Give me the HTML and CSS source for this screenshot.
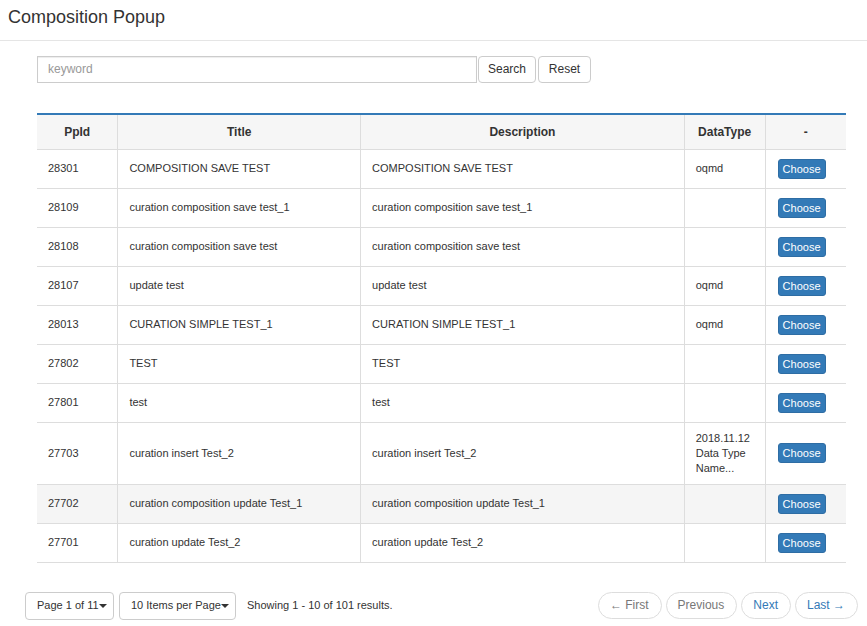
FILE: index.html
```html
<!DOCTYPE html>
<html>
<head>
<meta charset="utf-8">
<title>Composition Popup</title>
<link rel="stylesheet" href="styles.css">
</head>
<body>
<header class="popup-header">Composition Popup</header>
<main class="content">
  <form class="search-row">
    <input class="search-input" type="text" placeholder="keyword">
    <button type="button" class="btn btn-search">Search</button>
    <button type="button" class="btn btn-reset">Reset</button>
  </form>
  <table class="grid">
    <colgroup>
      <col class="c10"><col class="c30"><col class="c40"><col class="c10"><col class="c10">
    </colgroup>
    <thead>
      <tr><th>PpId</th><th>Title</th><th>Description</th><th>DataType</th><th>-</th></tr>
    </thead>
    <tbody>
      <tr><td>28301</td><td>COMPOSITION SAVE TEST</td><td>COMPOSITION SAVE TEST</td><td>oqmd</td><td><button class="choose">Choose</button></td></tr>
      <tr><td>28109</td><td>curation composition save test_1</td><td>curation composition save test_1</td><td></td><td><button class="choose">Choose</button></td></tr>
      <tr><td>28108</td><td>curation composition save test</td><td>curation composition save test</td><td></td><td><button class="choose">Choose</button></td></tr>
      <tr><td>28107</td><td>update test</td><td>update test</td><td>oqmd</td><td><button class="choose">Choose</button></td></tr>
      <tr><td>28013</td><td>CURATION SIMPLE TEST_1</td><td>CURATION SIMPLE TEST_1</td><td>oqmd</td><td><button class="choose">Choose</button></td></tr>
      <tr><td>27802</td><td>TEST</td><td>TEST</td><td></td><td><button class="choose">Choose</button></td></tr>
      <tr><td>27801</td><td>test</td><td>test</td><td></td><td><button class="choose">Choose</button></td></tr>
      <tr><td>27703</td><td>curation insert Test_2</td><td>curation insert Test_2</td><td>2018.11.12<br>Data Type<br>Name...</td><td><button class="choose">Choose</button></td></tr>
      <tr class="hover"><td>27702</td><td>curation composition update Test_1</td><td>curation composition update Test_1</td><td></td><td><button class="choose">Choose</button></td></tr>
      <tr><td>27701</td><td>curation update Test_2</td><td>curation update Test_2</td><td></td><td><button class="choose">Choose</button></td></tr>
    </tbody>
  </table>
</main>
<footer class="pager-bar">
  <div class="pager-left">
    <button class="btn btn-sm btn-page">Page 1 of 11<span class="caret"></span></button>
    <button class="btn btn-sm btn-items">10 Items per Page<span class="caret"></span></button>
    <span class="showing">Showing 1 - 10 of 101 results.</span>
  </div>
  <div class="pager-right">
    <span class="pill disabled">&larr; First</span>
    <span class="pill disabled">Previous</span>
    <span class="pill">Next</span>
    <span class="pill">Last &rarr;</span>
  </div>
</footer>
</body>
</html>
```
FILE: styles.css
```css
* { box-sizing: border-box; }
html, body { margin: 0; padding: 0; }
body {
  font-family: "Liberation Sans", Arial, sans-serif;
  color: #333;
  background: #fff;
  width: 867px;
}
.popup-header {
  font-size: 18px;
  line-height: 30px;
  padding: 2px 8px 8px;
  border-bottom: 1px solid #e5e5e5;
  height: 41px;
}
.content {
  padding: 14px 21px 0 37px;
}
.search-row {
  display: flex;
  align-items: center;
  gap: 1px;
  height: 28px;
  margin: 0;
}
.search-input {
  width: 440px;
  height: 27px;
  border: 1px solid #ccc;
  box-shadow: inset 0 1px 1px rgba(0,0,0,.075);
  padding: 0 10px;
  font-family: inherit;
  font-size: 12px;
  color: #555;
  margin: 0;
  outline: none;
}
.search-input::placeholder { color: #999; }
.btn {
  font-family: inherit;
  font-size: 12px;
  line-height: 17px;
  padding: 4px 9px;
  color: #333;
  background: #fff;
  border: 1px solid #ccc;
  border-radius: 4px;
  margin: 0;
  height: 27px;
}
.btn-search { width: 58px; }
.btn-reset { width: 53px; margin-left: 1px; }
.grid {
  width: 809px;
  margin-top: 30px;
  border-collapse: collapse;
  table-layout: fixed;
  font-size: 11px;
}
.c10 { width: 10%; }
.c30 { width: 30%; }
.c40 { width: 40%; }
.grid thead tr { border-top: 2px solid #337ab7; }
.grid th {
  background: #f6f6f6;
  font-size: 12px;
  font-weight: bold;
  text-align: center;
  height: 35px;
  padding: 0 10px;
  border-bottom: 1px solid #ddd;
  border-left: 1px solid #ddd;
  vertical-align: middle;
}
.grid td {
  height: 39px;
  padding: 8px 10px 8px 11px;
  line-height: 15px;
  border-bottom: 1px solid #ddd;
  border-left: 1px solid #ddd;
  vertical-align: middle;
  text-align: left;
}
.grid th:first-child, .grid td:first-child { border-left: none; }
.grid tr.hover td { background: #f5f5f5; }
.choose {
  font-family: inherit;
  font-size: 11px;
  line-height: 16px;
  padding: 1px 4px;
  color: #fff;
  background: #337ab7;
  border: 1px solid #2e6da4;
  border-radius: 3px;
  display: block;
  margin: 0 0 0 1px;
}
.pager-bar {
  display: flex;
  justify-content: space-between;
  align-items: center;
  padding: 0 9px 0 25px;
  margin-top: 29px;
}
.pager-left {
  display: flex;
  align-items: center;
  gap: 5px;
}
.btn-sm {
  font-size: 11px;
  padding: 4px 0 4px 11px;
  height: 28px;
  text-align: left;
  white-space: nowrap;
}
.btn-page { width: 89px; }
.btn-items { width: 117px; }
.caret {
  display: inline-block;
  width: 0;
  height: 0;
  margin-left: 0;
  vertical-align: middle;
  border-top: 4px solid #333;
  border-left: 4px solid transparent;
  border-right: 4px solid transparent;
}
.showing {
  font-size: 11px;
  margin-left: 6px;
  margin-top: -2px;
}
.pager-right {
  display: flex;
  align-items: center;
  gap: 4px;
}
.pill {
  font-size: 12px;
  line-height: 17px;
  padding: 4px 12px 4px 11px;
  height: 27px;
  border: 1px solid #ddd;
  border-radius: 15px;
  color: #337ab7;
  background: #fff;
}
.pill.disabled { color: #777; }
```
